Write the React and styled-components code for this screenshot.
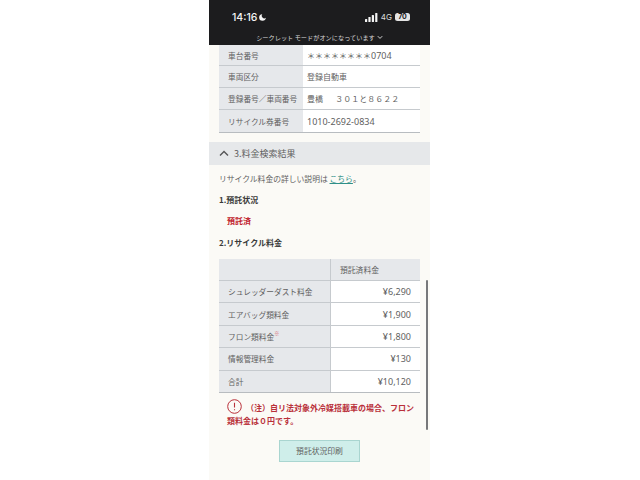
import styled, { createGlobalStyle } from "styled-components";

const GlobalStyle = createGlobalStyle`
  html, body {
    margin: 0;
    padding: 0;
    background: #fff;
  }
  * {
    box-sizing: border-box;
  }
`;

const vehicleRows = [
  { label: "車台番号", value: "＊＊＊＊＊＊＊＊", digits: "0704", height: 21 },
  { label: "車両区分", value: "登録自動車", height: 22 },
  { label: "登録番号／車両番号", value: "豊橋　  ３０１と８６２２", height: 22 },
  { label: "リサイクル券番号", digits: "1010-2692-0834", height: 22 },
];

const feeRows = [
  { label: "シュレッダーダスト料金", value: "¥6,290" },
  { label: "エアバッグ類料金", value: "¥1,900" },
  { label: "フロン類料金", value: "¥1,800", note: true },
  { label: "情報管理料金", value: "¥130" },
  { label: "合計", value: "¥10,120" },
];

const App = () => (
  <>
    <GlobalStyle />
    <Page>
      <Phone>
        <StatusBar>
          <StatusRow>
            <Time>
              14:16
              <svg width="9" height="9" viewBox="0 0 24 24" fill="#f4f4f4">
                <path d="M21 12.8A9 9 0 1 1 11.2 3a7 7 0 0 0 9.8 9.8z" />
              </svg>
            </Time>
            <StatusIcons>
              <svg width="13" height="9" viewBox="0 0 13 9" fill="#f4f4f4">
                <rect x="0" y="6" width="2.2" height="3" rx="0.5" />
                <rect x="3.4" y="4" width="2.2" height="5" rx="0.5" />
                <rect x="6.8" y="2" width="2.2" height="7" rx="0.5" />
                <rect x="10.2" y="0" width="2.2" height="9" rx="0.5" />
              </svg>
              <Network>4G</Network>
              <Battery>70</Battery>
            </StatusIcons>
          </StatusRow>
          <Incognito>
            シークレット モードがオンになっています
            <svg width="6" height="5" viewBox="0 0 8 6" fill="none" stroke="#e8e8e8" strokeWidth="1.2">
              <path d="M1 1.2l3 3 3-3" />
            </svg>
          </Incognito>
        </StatusBar>

        <Content>
          <VehicleTable>
            {vehicleRows.map((row) => (
              <VehicleRow key={row.label} $height={row.height}>
                <LabelCell>{row.label}</LabelCell>
                <ValueCell>
                  {row.value}
                  {row.digits && <Digits>{row.digits}</Digits>}
                </ValueCell>
              </VehicleRow>
            ))}
          </VehicleTable>

          <SectionHeader>
            <svg width="10" height="7" viewBox="0 0 10 7" fill="none" stroke="#555" strokeWidth="1.4">
              <path d="M1 5.5l4-4 4 4" />
            </svg>
            3.料金検索結果
          </SectionHeader>

          <Body>
            <Intro>
              リサイクル料金の詳しい説明は <Link>こちら</Link>。
            </Intro>
            <Heading>1.預託状況</Heading>
            <Status>預託済</Status>
            <Heading>2.リサイクル料金</Heading>

            <FeeTable>
              <FeeHead>
                <FeeHeadBlank />
                <FeeHeadTitle>預託済料金</FeeHeadTitle>
              </FeeHead>
              {feeRows.map((row) => (
                <FeeRow key={row.label}>
                  <FeeLabel>
                    {row.label}
                    {row.note && <Mark>※</Mark>}
                  </FeeLabel>
                  <FeeValue>{row.value}</FeeValue>
                </FeeRow>
              ))}
            </FeeTable>

            <Notice>
              <NoticeIcon width="15" height="15" viewBox="0 0 15 15" fill="none" stroke="#b9303a">
                <circle cx="7.5" cy="7.5" r="6.8" />
                <path d="M7.5 3.8v4.6M7.5 10.2v1" strokeWidth="1.1" />
              </NoticeIcon>
              （注）自リ法対象外冷媒搭載車の場合、フロン類料金は０円です。
            </Notice>

            <PrintRow>
              <PrintButton>預託状況印刷</PrintButton>
            </PrintRow>
          </Body>
          <ScrollBar />
        </Content>
      </Phone>
    </Page>
  </>
);

export default App;

const Page = styled.div`
  width: 640px;
  height: 480px;
  display: flex;
  justify-content: center;
  overflow: hidden;
  font-family: "Noto Sans CJK JP", "Inter", sans-serif;
`;

const Phone = styled.div`
  width: 221px;
  margin-left: -1px;
  height: 480px;
  background: #fbfaf6;
  display: flex;
  flex-direction: column;
  overflow: hidden;
`;

const StatusBar = styled.div`
  height: 45px;
  flex-shrink: 0;
  background: #1c1c1e;
  color: #f4f4f4;
  display: flex;
  flex-direction: column;
`;

const StatusRow = styled.div`
  display: flex;
  justify-content: space-between;
  align-items: center;
  padding: 10px 20px 0 23px;
  height: 24px;
`;

const Time = styled.div`
  display: flex;
  align-items: center;
  gap: 1px;
  font-family: "Inter", sans-serif;
  font-size: 10.5px;
  font-weight: 500;
`;

const StatusIcons = styled.div`
  display: flex;
  align-items: center;
  gap: 3px;
`;

const Network = styled.span`
  font-family: "Inter", sans-serif;
  font-size: 8px;
  color: #dcdcdc;
`;

const Battery = styled.span`
  width: 15px;
  height: 8px;
  border-radius: 2.5px;
  background: #e4e4e4;
  color: #1c1c1e;
  font-family: "Inter", sans-serif;
  font-size: 7px;
  font-weight: 700;
  line-height: 8px;
  text-align: center;
`;

const Incognito = styled.div`
  margin-top: 9px;
  display: flex;
  justify-content: center;
  align-items: center;
  gap: 2px;
  font-size: 6.2px;
  color: #d8d8d8;
`;

const Content = styled.div`
  position: relative;
  flex: 1;
  min-height: 0;
`;

const VehicleTable = styled.div`
  margin: 0 10px;
  border-bottom: 1px solid #b8bcc0;
`;

const VehicleRow = styled.div`
  display: grid;
  grid-template-columns: 84px 1fr;
  height: ${(p) => p.$height}px;
  border-bottom: 1px solid #c6cace;

  &:last-child {
    border-bottom: none;
  }
`;

const LabelCell = styled.div`
  display: flex;
  align-items: center;
  padding-left: 9px;
  background: #e6e8eb;
  color: #5f5f5f;
  font-size: 7.7px;
  white-space: nowrap;
`;

const ValueCell = styled.div`
  display: flex;
  align-items: center;
  padding-left: 4px;
  background: #fff;
  color: #5f5f5f;
  font-family: "Noto Sans", "Noto Sans CJK JP", sans-serif;
  font-size: 8px;
  white-space: pre;
`;

const Digits = styled.span`
  font-size: 9px;
`;

const SectionHeader = styled.div`
  margin-top: 9px;
  height: 23px;
  display: flex;
  align-items: center;
  gap: 5px;
  padding-left: 10px;
  background: #e6e8ea;
  color: #5f5f5f;
  font-size: 9px;
`;

const Body = styled.div`
  padding: 0 10px;
`;

const Intro = styled.div`
  margin-top: 8px;
  height: 11px;
  line-height: 11px;
  font-size: 7.8px;
  color: #5f5f5f;
`;

const Link = styled.span`
  color: #2e8f88;
  text-decoration: underline;
`;

const Heading = styled.div`
  margin-top: 10px;
  height: 11px;
  line-height: 11px;
  font-size: 8px;
  font-weight: 700;
  color: #3a3a3a;
`;

const Status = styled.div`
  margin: 10px 0 11px 8px;
  height: 11px;
  line-height: 11px;
  font-size: 8px;
  font-weight: 700;
  color: #c0202a;
`;

const FeeTable = styled.div`
  margin-top: 11px;
  border-bottom: 1px solid #b8bcc0;
`;

const FeeHead = styled.div`
  display: grid;
  grid-template-columns: 112px 1fr;
  height: 21px;
  background: #e6e8eb;
`;

const FeeHeadBlank = styled.div`
  border-right: 1px solid #c6cace;
`;

const FeeHeadTitle = styled.div`
  display: flex;
  align-items: center;
  padding-left: 9px;
  font-size: 7.8px;
  color: #5f5f5f;
`;

const FeeRow = styled.div`
  display: grid;
  grid-template-columns: 112px 1fr;
  height: 22.4px;
  border-top: 1px solid #c6cace;
`;

const FeeLabel = styled.div`
  display: flex;
  align-items: center;
  padding-left: 9px;
  background: #e6e8eb;
  color: #5f5f5f;
  font-size: 7.7px;
  border-right: 1px solid #c6cace;
`;

const Mark = styled.sup`
  font-size: 5px;
  color: #d9606a;
  align-self: flex-start;
  margin: 4px 0 0;
  line-height: 1;
`;

const FeeValue = styled.div`
  display: flex;
  align-items: center;
  justify-content: flex-end;
  padding-right: 9px;
  background: #fff;
  color: #5f5f5f;
  font-family: "Noto Sans", sans-serif;
  font-size: 9px;
`;

const Notice = styled.div`
  margin: 6px 0 0 8px;
  width: 190px;
  line-height: 13px;
  font-size: 8px;
  font-weight: 700;
  color: #b9303a;
`;

const NoticeIcon = styled.svg`
  margin-right: 4px;
  vertical-align: -3px;
`;

const PrintRow = styled.div`
  display: flex;
  justify-content: center;
  margin-top: 13px;
`;

const PrintButton = styled.div`
  width: 81px;
  height: 22px;
  display: flex;
  align-items: center;
  justify-content: center;
  background: #cfeeea;
  border: 1px solid #a9d5d0;
  color: #5f5f5f;
  font-size: 7.8px;
`;

const ScrollBar = styled.div`
  position: absolute;
  right: 2px;
  top: 235px;
  width: 2px;
  height: 150px;
  background: #77787a;
  border-radius: 1px;
`;
